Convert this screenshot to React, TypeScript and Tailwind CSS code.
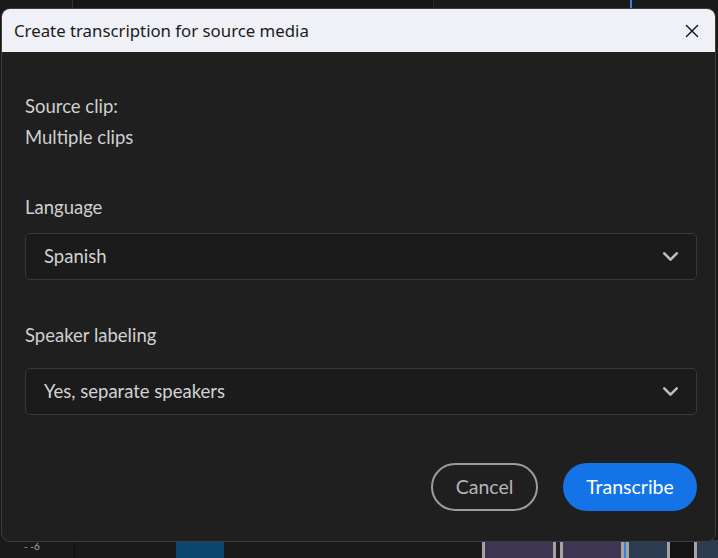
import { X, ChevronDown } from 'lucide-react';

const Select = ({ value }: { value: string }) => (
    <div className="h-[47px] flex items-center justify-between rounded-[5px] border border-[#393939] bg-[#1b1b1b] pl-[18px] pr-[13px]">
        <span className="text-[18.5px] text-[#d2d2d2]">{value}</span>
        <ChevronDown className="w-[25px] h-[25px] text-[#bdbdbd]" strokeWidth={2.5} />
    </div>
);

export default function App() {
    return (
        <div className="relative w-[718px] h-[558px] overflow-hidden bg-[#181818]" style={{ fontFamily: 'Lato, "Noto Sans", sans-serif' }}>
            {/* app behind the dialog */}
            <div className="flex flex-col h-full justify-between">
                <div className="h-[10px] flex bg-[#1a1a1a]">
                    <div className="w-[72px]" />
                    <div className="w-px bg-[#333]" />
                    <div className="w-[360px] bg-[#161616]" />
                    <div className="w-px bg-[#2a2a2a]" />
                    <div className="w-[196px]" />
                    <div className="w-[2px] bg-[#3b82d6]" />
                </div>
                <div className="h-[18px] flex bg-[#1a1a1a] text-[10px] text-[#aaa]">
                    <div className="w-[24px]" />
                    <div className="w-[50px] leading-[10px] pt-[1px]">- -6</div>
                    <div className="w-px bg-[#0e0e0e]" />
                    <div className="w-[101px] bg-[#191919]" />
                    <div className="w-[48px] bg-[#0b466f]" />
                    <div className="w-[258px] bg-[#1a1a1a]" />
                    <div className="w-[3px] bg-[#a3a3a3]" />
                    <div className="w-[68px] bg-[#3e3552]" />
                    <div className="w-[3px] bg-[#a3a3a3]" />
                    <div className="w-[4px] bg-[#222]" />
                    <div className="w-[3px] bg-[#a3a3a3]" />
                    <div className="w-[58px] bg-[#3e3552]" />
                    <div className="w-[3px] bg-[#a3a3a3]" />
                    <div className="w-[2px] bg-[#3b82d6]" />
                    <div className="w-[3px] bg-[#a3a3a3]" />
                    <div className="w-[38px] bg-[#2e3c51]" />
                    <div className="w-[3px] bg-[#a3a3a3]" />
                    <div className="w-[24px] bg-[#141414]" />
                    <div className="w-[3px] bg-[#a3a3a3]" />
                    <div className="flex-1 bg-[#2e3c51]" />
                </div>
            </div>

            {/* dialog */}
            <div className="absolute left-[1px] top-[8px] w-[715px] h-[534px] flex flex-col rounded-[9px] border border-[#3d3d3d] bg-[#1f1f1f] overflow-hidden">
                <div className="h-[43px] flex items-center justify-between bg-[#f0f1f6] pl-[12px] pr-[12px]">
                    <span className="text-[16.8px] text-[#1b1b1b]" style={{ fontFamily: '"Noto Sans", sans-serif' }}>Create transcription for source media</span>
                    <X className="w-[22px] h-[22px] text-[#1b1b1b]" strokeWidth={1.6} />
                </div>

                <div className="flex flex-col pl-[23px] pr-[18px] pt-[39px] text-[18.5px] text-[#d0d0d0]">
                    <div className="leading-[31px]">Source clip:</div>
                    <div className="leading-[31px]">Multiple clips</div>

                    <div className="leading-[24px] mt-[42px] mb-[14px]">Language</div>
                    <Select value="Spanish" />

                    <div className="leading-[24px] mt-[43px] mb-[21px]">Speaker labeling</div>
                    <Select value="Yes, separate speakers" />

                    <div className="flex justify-end gap-[25px] mt-[48px]">
                        <button className="h-[48px] w-[107px] rounded-full border-2 border-[#9d9d9d] text-[19.5px] text-[#b5b5b5]">Cancel</button>
                        <button className="h-[48px] w-[134px] rounded-full bg-[#1473e6] text-[19.5px] text-white">Transcribe</button>
                    </div>
                </div>
            </div>
        </div>
    );
}
